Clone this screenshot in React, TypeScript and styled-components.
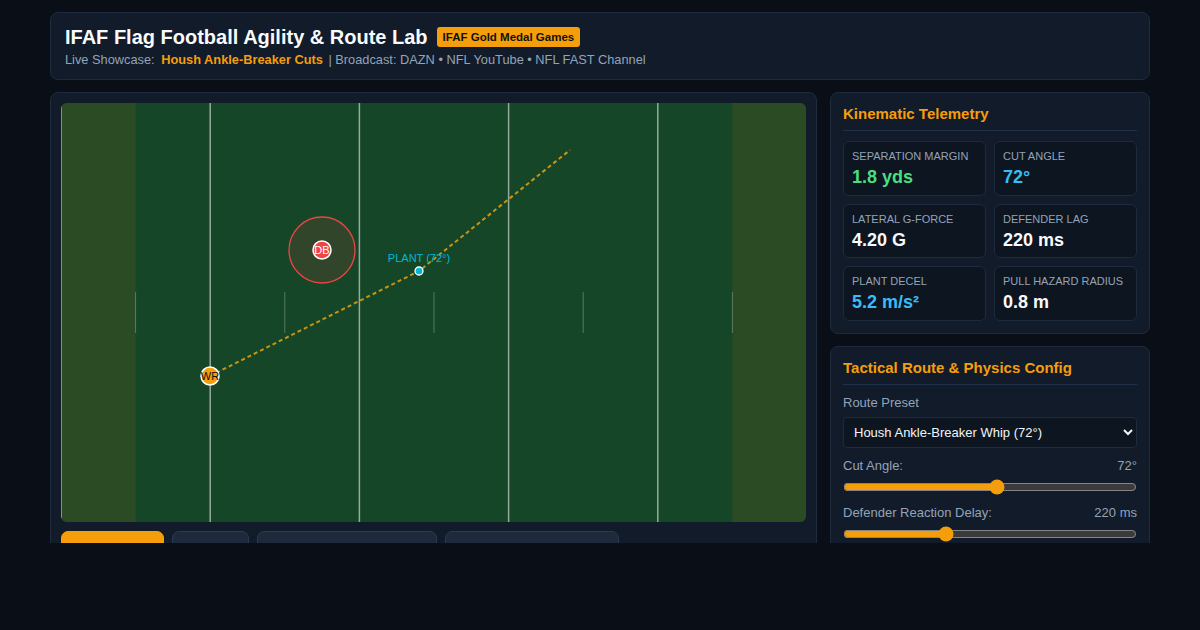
import React from 'react';
import styled, { createGlobalStyle } from 'styled-components';

const GlobalStyle = createGlobalStyle`
  html, body {
    margin: 0;
    padding: 0;
    background: #0a0f17;
    color-scheme: dark;
  }
  * { box-sizing: border-box; }
`;

const FIELD_W = 746;
const FIELD_H = 419;
const UNIT = FIELD_W / 100;

interface Metric {
  label: string;
  value: string;
  tone: 'green' | 'blue' | 'white';
}

const metrics: Metric[] = [
  { label: 'Separation Margin', value: '1.8 yds', tone: 'green' },
  { label: 'Cut Angle', value: '72°', tone: 'blue' },
  { label: 'Lateral G-Force', value: '4.20 G', tone: 'white' },
  { label: 'Defender Lag', value: '220 ms', tone: 'white' },
  { label: 'Plant Decel', value: '5.2 m/s²', tone: 'blue' },
  { label: 'Pull Hazard Radius', value: '0.8 m', tone: 'white' },
];

const toneColors = {
  green: '#4ade80',
  blue: '#38bdf8',
  white: '#f8fafc',
};

const actions = [
  { label: '▶ Run Drill', primary: true, width: 103 },
  { label: 'Reset', primary: false, width: 77 },
  { label: 'Toggle Defender Vision', primary: false, width: 180 },
  { label: 'Export Telemetry CSV', primary: false, width: 174 },
];

const Field = () => {
  const wr = { x: 149, y: 273 };
  const plant = { x: 358, y: 168 };
  const end = { x: 509, y: 47 };
  const db = { x: 261, y: 147 };

  return (
    <FieldSvg viewBox={`0 0 ${FIELD_W} ${FIELD_H}`} width={FIELD_W} height={FIELD_H}>
      <rect x={0} y={0} width={FIELD_W} height={FIELD_H} fill="#154628" />
      <rect x={0} y={0} width={UNIT * 10} height={FIELD_H} fill="#2b4b24" />
      <rect x={UNIT * 90} y={0} width={UNIT * 10} height={FIELD_H} fill="#2b4b24" />
      {[0, 20, 40, 60, 80, 100].map((yd) => (
        <line
          key={yd}
          x1={yd * UNIT}
          x2={yd * UNIT}
          y1={0}
          y2={FIELD_H}
          stroke="rgba(255,255,255,0.55)"
          strokeWidth={1.5}
        />
      ))}
      {[10, 30, 50, 70, 90].map((yd) => (
        <line
          key={yd}
          x1={yd * UNIT}
          x2={yd * UNIT}
          y1={189}
          y2={230}
          stroke="rgba(255,255,255,0.28)"
          strokeWidth={1}
        />
      ))}
      <polyline
        points={`${wr.x},${wr.y} ${plant.x},${plant.y} ${end.x},${end.y}`}
        fill="none"
        stroke="#c99414"
        strokeWidth={2}
        strokeDasharray="4 3"
      />
      <circle cx={db.x} cy={db.y} r={33} fill="rgba(239,68,68,0.13)" stroke="#ef4444" strokeWidth={1.3} />
      <circle cx={db.x} cy={db.y} r={9} fill="#ef4444" stroke="#fff" strokeWidth={1.5} />
      <FieldText x={db.x} y={db.y + 4} fill="#fff">DB</FieldText>
      <circle cx={plant.x} cy={plant.y} r={4} fill="#06b6d4" stroke="#fff" strokeWidth={1.3} />
      <FieldText x={plant.x} y={plant.y - 9} fill="#06b6d4">PLANT (72°)</FieldText>
      <circle cx={wr.x} cy={wr.y} r={9} fill="#f59e0b" stroke="#fff" strokeWidth={1.5} />
      <FieldText x={wr.x} y={wr.y + 4} fill="#111">WR</FieldText>
    </FieldSvg>
  );
};

export default function App() {
  return (
    <>
      <GlobalStyle />
      <Viewport>
        <Page>
          <Header>
            <TitleRow>
              <Title>IFAF Flag Football Agility &amp; Route Lab</Title>
              <Badge>IFAF Gold Medal Games</Badge>
            </TitleRow>
            <Subtitle>
              Live Showcase: <Highlight>Housh Ankle-Breaker Cuts</Highlight> | Broadcast: DAZN • NFL
              YouTube • NFL FAST Channel
            </Subtitle>
          </Header>

          <Main>
            <Panel>
              <FieldFrame>
                <Field />
              </FieldFrame>
              <ActionRow>
                {actions.map((a) => (
                  <ActionButton key={a.label} $primary={a.primary} $width={a.width}>
                    {a.label}
                  </ActionButton>
                ))}
              </ActionRow>
            </Panel>

            <Sidebar>
              <Card>
                <CardTitle>Kinematic Telemetry</CardTitle>
                <MetricGrid>
                  {metrics.map((m) => (
                    <MetricBox key={m.label}>
                      <MetricLabel>{m.label}</MetricLabel>
                      <MetricValue $tone={m.tone}>{m.value}</MetricValue>
                    </MetricBox>
                  ))}
                </MetricGrid>
              </Card>

              <Card>
                <CardTitle>Tactical Route &amp; Physics Config</CardTitle>
                <FieldLabel>Route Preset</FieldLabel>
                <Select defaultValue="housh">
                  <option value="housh">Housh Ankle-Breaker Whip (72°)</option>
                  <option value="slant">Quick Slant (45°)</option>
                  <option value="out">Speed Out (90°)</option>
                </Select>
                <SliderRow>
                  <span>Cut Angle:</span>
                  <span>72°</span>
                </SliderRow>
                <Range type="range" min={30} max={110} defaultValue={72} />
                <SliderRow>
                  <span>Defender Reaction Delay:</span>
                  <span>220 ms</span>
                </SliderRow>
                <Range type="range" min={100} max={450} defaultValue={220} />
              </Card>
            </Sidebar>
          </Main>
        </Page>
      </Viewport>
    </>
  );
}

const Viewport = styled('div')({
  height: 543,
  overflow: 'hidden',
  fontFamily: '"Liberation Sans", Arial, sans-serif',
  color: '#f1f5f9',
});

const Page = styled('div')({
  width: 1100,
  margin: '0 auto',
  paddingTop: 12,
  display: 'flex',
  flexDirection: 'column',
  gap: 12,
});

const Header = styled('header')({
  background: '#111b29',
  border: '1px solid #1e2b3c',
  borderRadius: 8,
  padding: '11px 14px 11px',
});

const TitleRow = styled('div')({
  display: 'flex',
  alignItems: 'center',
  gap: 9,
});

const Title = styled('h1')({
  margin: 0,
  fontSize: 20,
  fontWeight: 700,
  color: '#f8fafc',
  lineHeight: '26px',
});

const Badge = styled('span')({
  background: '#f59e0b',
  color: '#111',
  fontSize: 11.5,
  fontWeight: 700,
  lineHeight: '12px',
  padding: '4px 6px',
  borderRadius: 3,
});

const Subtitle = styled('div')({
  marginTop: 2,
  fontSize: 12.8,
  color: '#94a3b8',
  lineHeight: '16px',
});

const Highlight = styled('strong')({
  color: '#f59e0b',
  margin: '0 2px 0 3px',
});

const Main = styled('div')({
  display: 'grid',
  gridTemplateColumns: '767px 320px',
  gap: 13,
  alignItems: 'start',
});

const Panel = styled('section')({
  background: '#111b29',
  border: '1px solid #1e2b3c',
  borderRadius: 8,
  padding: 10,
});

const FieldFrame = styled('div')({
  borderRadius: 6,
  overflow: 'hidden',
  lineHeight: 0,
});

const FieldSvg = styled('svg')({
  display: 'block',
});

const FieldText = styled('text')({
  fontFamily: '"Liberation Sans", Arial, sans-serif',
  fontSize: 11,
  textAnchor: 'middle',
});

const ActionRow = styled('div')({
  display: 'flex',
  gap: 8,
  marginTop: 9,
});

const ActionButton = styled('button')<{ $primary: boolean; $width: number }>((p) => ({
  width: p.$width,
  height: 34,
  borderRadius: 7,
  border: p.$primary ? '1px solid #f59e0b' : '1px solid #2a3a50',
  background: p.$primary ? '#f59e0b' : '#1e293b',
  color: p.$primary ? '#111' : '#e2e8f0',
  fontFamily: '"Liberation Sans", Arial, sans-serif',
  fontSize: 13,
  fontWeight: 700,
}));

const Sidebar = styled('aside')({
  display: 'flex',
  flexDirection: 'column',
  gap: 12,
});

const Card = styled('section')({
  background: '#111b29',
  border: '1px solid #1e2b3c',
  borderRadius: 8,
  padding: '12px 12px 12px',
});

const CardTitle = styled('h2')({
  margin: '0 0 10px',
  paddingBottom: 7,
  borderBottom: '1px solid #1f3048',
  fontSize: 15,
  fontWeight: 700,
  color: '#f59e0b',
  lineHeight: '18px',
});

const MetricGrid = styled('div')({
  display: 'grid',
  gridTemplateColumns: '1fr 1fr',
  gap: 8,
});

const MetricBox = styled('div')({
  background: '#0c1520',
  border: '1px solid #1e2b3c',
  borderRadius: 6,
  padding: '7px 8px 8px',
  height: 54.5,
});

const MetricLabel = styled('div')({
  fontSize: 11,
  textTransform: 'uppercase',
  color: '#94a3b8',
  lineHeight: '14px',
});

const MetricValue = styled('div')<{ $tone: Metric['tone'] }>((p) => ({
  marginTop: 3,
  fontSize: 18,
  fontWeight: 700,
  lineHeight: '22px',
  color: toneColors[p.$tone],
}));

const FieldLabel = styled('div')({
  fontSize: 13,
  color: '#94a3b8',
  lineHeight: '16px',
  marginBottom: 6,
});

const Select = styled('select')({
  width: '100%',
  height: 31,
  background: '#0c1520',
  color: '#f1f5f9',
  border: '1px solid #1e2b3c',
  borderRadius: 4,
  padding: '0 6px',
  fontFamily: '"Liberation Sans", Arial, sans-serif',
  fontSize: 13,
});

const SliderRow = styled('div')({
  display: 'flex',
  justifyContent: 'space-between',
  marginTop: 10,
  fontSize: 13,
  color: '#94a3b8',
  lineHeight: '16px',
});

const Range = styled('input')({
  display: 'block',
  width: '100%',
  margin: '5px 0 0',
  accentColor: '#f59e0b',
});
